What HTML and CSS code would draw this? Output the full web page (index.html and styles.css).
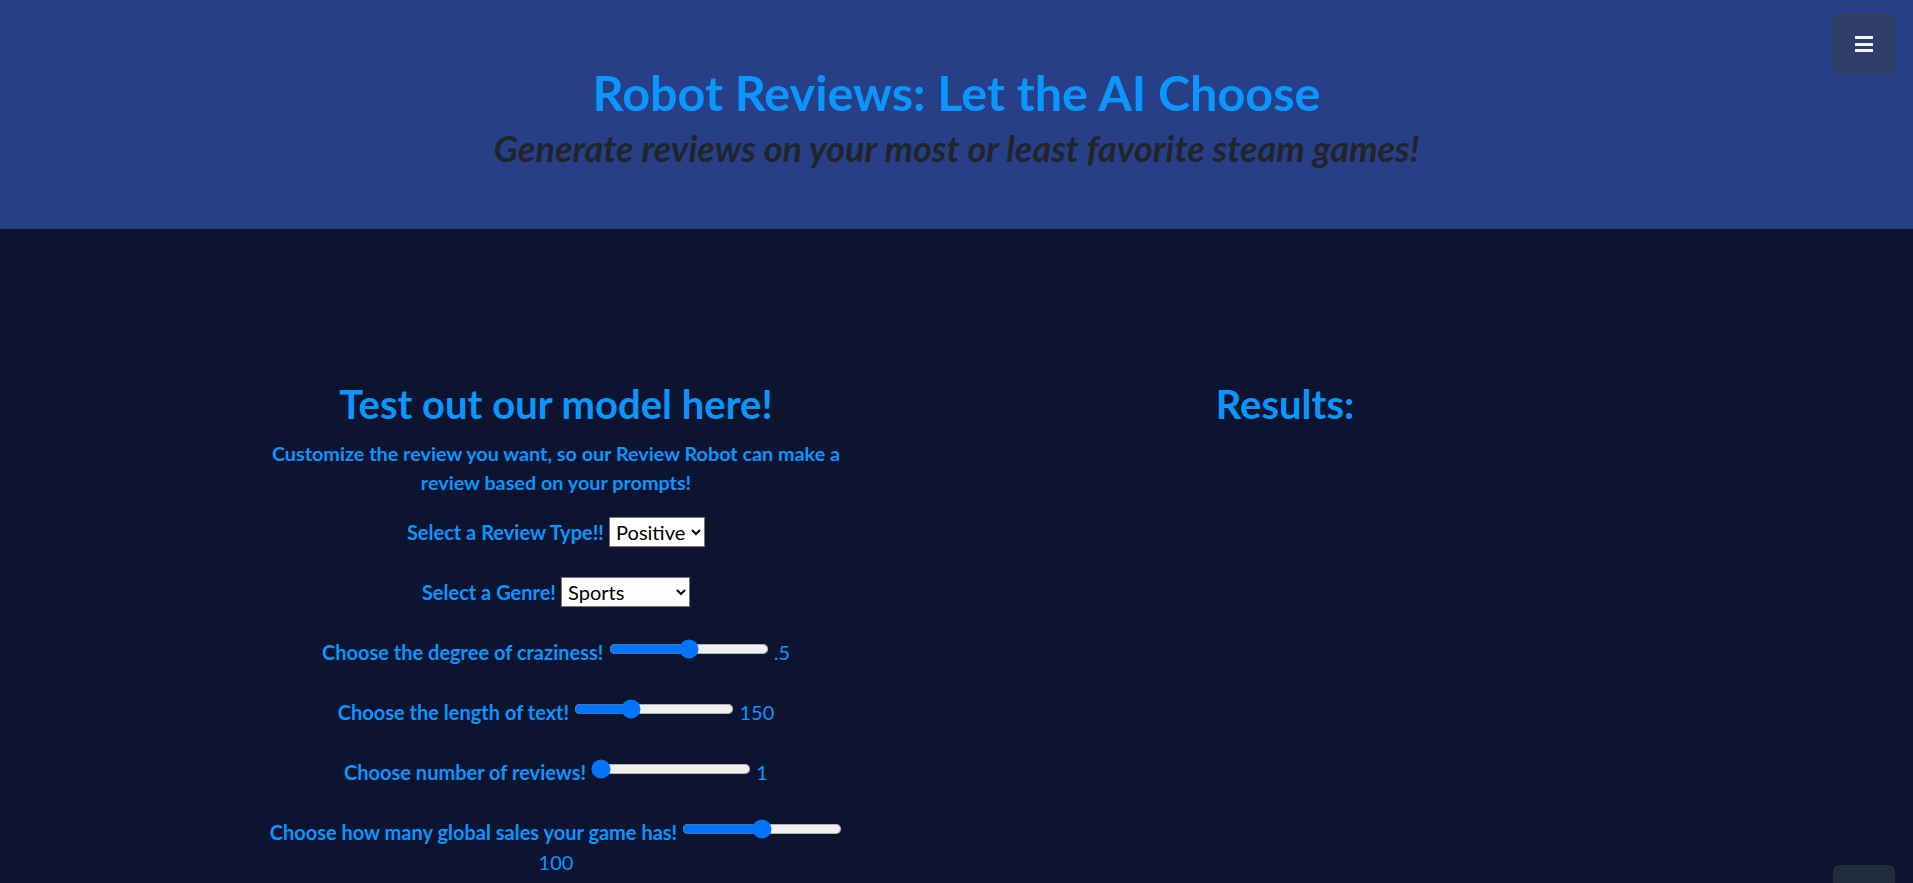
FILE: index.html
```html
<!DOCTYPE html>
<html lang="en">
<head>
<meta charset="utf-8">
<title>Robot Reviews: Let the AI Choose</title>
<link rel="stylesheet" href="styles.css">
</head>
<body>
<header class="hero">
  <button class="menu-btn" aria-label="Menu"><span class="bar"></span><span class="bar"></span><span class="bar"></span></button>
  <h1 class="hero-title">Robot Reviews: Let the AI Choose</h1>
  <h2 class="hero-sub">Generate reviews on your most or least favorite steam games!</h2>
</header>
<main class="content">
  <section class="form-col">
    <h2 class="col-title">Test out our model here!</h2>
    <p class="intro">Customize the review you want, so our Review Robot can make a review based on your prompts!</p>
    <form class="review-form">
      <div class="field"><label class="lbl">Select a Review Type!!</label> <select class="sel sel-type"><option>Positive</option><option>Negative</option></select></div>
      <div class="field"><label class="lbl">Select a Genre!</label> <select class="sel sel-genre"><option>Sports</option><option>Action</option><option>Adventure</option><option>Strategy</option><option>Simulation</option><option>Racing</option></select></div>
      <div class="field"><label class="lbl">Choose the degree of craziness!</label> <input class="slider" type="range" min="0" max="1" step="0.1" value="0.5"> <span class="val">.5</span></div>
      <div class="field"><label class="lbl">Choose the length of text!</label> <input class="slider" type="range" min="50" max="350" value="150"> <span class="val">150</span></div>
      <div class="field"><label class="lbl">Choose number of reviews!</label> <input class="slider" type="range" min="1" max="10" value="1"> <span class="val">1</span></div>
      <div class="field"><label class="lbl">Choose how many global sales your game has!</label> <input class="slider" type="range" min="0" max="200" value="100"> <span class="val">100</span></div>
    </form>
  </section>
  <section class="results-col">
    <h2 class="col-title">Results:</h2>
  </section>
</main>
<a class="top-btn" href="#" aria-label="Back to top"></a>
</body>
</html>
```
FILE: styles.css
```css
html, body {
  margin: 0;
  padding: 0;
}
body {
  background: #0c1430;
  font-family: Lato, "Open Sans", sans-serif;
  color: #0a96ff;
  min-height: 883px;
}
.hero {
  position: relative;
  background: #273f87;
  height: 229px;
  box-sizing: border-box;
  padding-top: 62.5px;
  text-align: center;
}
.hero-title {
  margin: 0;
  font-size: 48.5px;
  line-height: 1.2;
  font-weight: 700;
  color: #0a96ff;
}
.hero-sub {
  margin: 6px 0 0;
  font-size: 36px;
  line-height: 1.2;
  font-weight: 700;
  font-style: italic;
  color: #212529;
}
.menu-btn {
  position: absolute;
  top: 13px;
  right: 18px;
  width: 62px;
  height: 62px;
  border: 0;
  border-radius: 6px;
  background: #2f3e67;
  display: flex;
  flex-direction: column;
  align-items: center;
  justify-content: center;
  gap: 3.5px;
  padding: 0;
}
.bar {
  display: block;
  width: 18px;
  height: 3px;
  background: #f2f4f8;
}
.content {
  display: grid;
  grid-template-columns: 584px 660px;
  column-gap: 107px;
  padding: 150.5px 0 0 264px;
}
.form-col, .results-col {
  text-align: center;
}
.col-title {
  margin: 0;
  font-size: 40px;
  line-height: 1.2;
  font-weight: 700;
  color: #0a96ff;
}
.intro {
  margin: 11px 0 19.5px;
  font-size: 19.8px;
  line-height: 29.5px;
  font-weight: 700;
}
.review-form {
  margin: 0;
}
.field {
  font-size: 20px;
  line-height: 30px;
  height: 30px;
  margin-bottom: 30px;
}
.lbl {
  font-weight: 700;
}
.val {
  font-weight: 400;
}
.sel {
  font-family: Lato, "Open Sans", sans-serif;
  font-size: 20px;
  height: 30px;
  background: #fff;
  color: #000;
  border: 1px solid #767676;
  border-radius: 0;
  vertical-align: top;
  padding: 0 2px;
}
.sel-type {
  width: 96px;
}
.sel-genre {
  width: 129px;
}
.slider {
  width: 128px;
  height: 16px;
  zoom: 1.25;
  margin: 1.6px 0 0;
  vertical-align: top;
  accent-color: #0075ff;
}
.top-btn {
  position: fixed;
  right: 18px;
  bottom: -44px;
  width: 62px;
  height: 62px;
  border-radius: 6px;
  background: #202b3b;
}
```
